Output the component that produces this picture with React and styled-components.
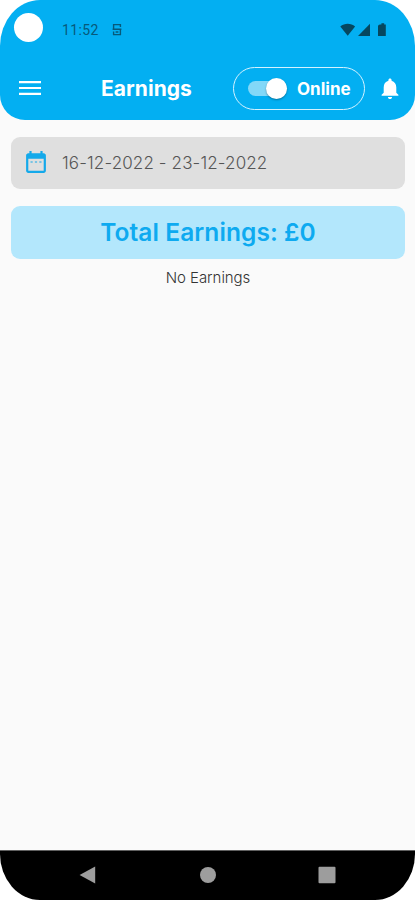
import React from "react";
import styled, { createGlobalStyle } from "styled-components";

const App = () => {
  return (
    <>
      <GlobalStyle />
      <Phone>
        <Header>
          <StatusBar>
            <Camera />
            <Time>11:52</Time>
            <DebugIcon viewBox="0 0 10 13">
              <path d="M1.6 5.8V1.6H8.4V4M0.6 6.2H9.4M8.4 6.2V11.6H1.6V8.6M3.6 9H6.4" />
            </DebugIcon>
            <StatusIcons viewBox="0 0 48 14">
              <path d="M0.3 3.4C4.5 0 10.9 0 15.1 3.4L7.7 12.8Z" />
              <path d="M30 0.8V13H18Z" />
              <path d="M40 1.6H41.4V0.3H44.2V1.6H45.8V13H38V3.2Q38 1.6 40 1.6Z" />
            </StatusIcons>
          </StatusBar>
          <Toolbar>
            <MenuIcon viewBox="0 0 22 14">
              <path d="M0 1.1H22M0 7H22M0 12.9H22" />
            </MenuIcon>
            <Title>Earnings</Title>
            <OnlinePill>
              <Switch>
                <Thumb />
              </Switch>
              <span>Online</span>
            </OnlinePill>
            <BellIcon viewBox="4 2 16 20">
              <path d="M12 22c1.1 0 2-.9 2-2h-4c0 1.1.9 2 2 2zm6-6v-5c0-3.07-1.63-5.64-4.5-6.32V4c0-.83-.67-1.5-1.5-1.5s-1.5.67-1.5 1.5v.68C7.64 5.36 6 7.92 6 11v5l-2 2v1h16v-1l-2-2z" />
            </BellIcon>
          </Toolbar>
        </Header>

        <Content>
          <DateRange>
            <CalendarIcon viewBox="3 1 18 20">
              <path d="M7 10h2v2H7zM11 10h2v2h-2zM15 10h2v2h-2z" opacity="0.5" />
              <path d="M19 3h-1V1h-2v2H8V1H6v2H5c-1.1 0-2 .9-2 2v14c0 1.1.9 2 2 2h14c1.1 0 2-.9 2-2V5c0-1.1-.9-2-2-2zm0 16H5V8h14v11z" />
            </CalendarIcon>
            <span>16-12-2022 - 23-12-2022</span>
          </DateRange>
          <Total>Total Earnings: £0</Total>
          <Empty>No Earnings</Empty>
        </Content>

        <NavBar>
          <NavIcon viewBox="0 0 18 18">
            <path d="M0.6 9L16.2 0.6V17.4Z" />
          </NavIcon>
          <NavIcon viewBox="0 0 18 18">
            <circle cx="9" cy="9" r="8" />
          </NavIcon>
          <NavIcon viewBox="0 0 18 18">
            <rect x="0.5" y="0.7" width="17" height="16.6" rx="1" />
          </NavIcon>
        </NavBar>
      </Phone>
    </>
  );
};

export default App;

const GlobalStyle = createGlobalStyle`
  * {
    box-sizing: border-box;
  }
  body {
    margin: 0;
    background: #ffffff;
    font-family: Inter, sans-serif;
  }
`;

const Phone = styled.div`
  width: 415px;
  height: 900px;
  display: flex;
  flex-direction: column;
  overflow: hidden;
  background: #fafafa;
  border-radius: 40px / 46px;
`;

const Header = styled.header`
  height: 119.5px;
  flex-shrink: 0;
  background: #03aff2;
  border-radius: 0 0 25px 25px;
`;

const StatusBar = styled.div`
  height: 57px;
  display: flex;
  align-items: center;
  padding: 2px 27px 0 14px;
`;

const Camera = styled.div`
  width: 29px;
  height: 29px;
  margin-top: -4px;
  border-radius: 50%;
  background: #ffffff;
`;

const Time = styled.span`
  width: 37px;
  margin: 1px 0 0 19px;
  font-family: Roboto, sans-serif;
  font-size: 14px;
  letter-spacing: 0.4px;
  color: #07597a;
`;

const DebugIcon = styled.svg`
  width: 10px;
  height: 13px;
  margin-left: 13px;
  fill: none;
  stroke: #07597a;
  stroke-width: 1.4;
`;

const StatusIcons = styled.svg`
  width: 48px;
  height: 14px;
  margin-left: auto;
  fill: #06475f;
`;

const Toolbar = styled.div`
  height: 62px;
  display: flex;
  align-items: center;
  padding: 0 16px 0 19px;
`;

const MenuIcon = styled.svg`
  width: 22px;
  height: 14px;
  fill: none;
  stroke: #ffffff;
  stroke-width: 2.2;
`;

const Title = styled.h1`
  width: 132px;
  margin: 1px 0 0 60px;
  font-size: 21px;
  font-weight: 700;
  line-height: 26px;
  letter-spacing: 0.05px;
  color: #ffffff;
`;

const OnlinePill = styled.div`
  width: 132px;
  height: 43px;
  display: flex;
  align-items: center;
  padding-left: 14px;
  border: 1.5px solid #d5f2ff;
  border-radius: 22px;
  color: #ffffff;
  font-size: 17px;
  font-weight: 700;

  span {
    margin: 1px 0 0 10px;
  }
`;

const Switch = styled.div`
  width: 39px;
  height: 15px;
  display: flex;
  align-items: center;
  justify-content: flex-end;
  border-radius: 8px;
  background: #83d8f8;
`;

const Thumb = styled.div`
  width: 21px;
  height: 21px;
  flex-shrink: 0;
  border-radius: 50%;
  background: #ffffff;
  box-shadow: 0 1px 2px rgba(0, 0, 0, 0.35);
`;

const BellIcon = styled.svg`
  width: 18px;
  height: 21px;
  margin-left: auto;
  fill: #ffffff;
`;

const Content = styled.main`
  flex: 1;
  display: flex;
  flex-direction: column;
  padding: 17px 10px 0 11px;
`;

const DateRange = styled.div`
  height: 52.5px;
  display: flex;
  align-items: center;
  padding-left: 15px;
  border-radius: 9px;
  background: #dfdfdf;
  color: #555555;
  font-size: 17px;
  font-weight: 300;
  letter-spacing: 0.13px;

  span {
    margin-left: 16px;
  }
`;

const CalendarIcon = styled.svg`
  width: 20px;
  height: 22px;
  margin-top: -1px;
  fill: #14a9ea;
`;

const Total = styled.div`
  height: 52.5px;
  margin-top: 17px;
  border-radius: 9px;
  background: #b3e7fc;
  color: #0eaaf0;
  font-size: 24.5px;
  font-weight: 600;
  line-height: 52px;
  letter-spacing: 0.08px;
  text-align: center;
`;

const Empty = styled.p`
  margin: 9px 0 0;
  color: #333333;
  font-size: 15px;
  font-weight: 300;
  line-height: 20px;
  letter-spacing: -0.05px;
  text-align: center;
`;

const NavBar = styled.nav`
  height: 50px;
  flex-shrink: 0;
  display: flex;
  align-items: center;
  justify-content: space-between;
  padding: 0 79px 1px;
  border-top: 1px solid #606060;
  background: #000000;
`;

const NavIcon = styled.svg`
  width: 18px;
  height: 18px;
  fill: #9d9d9d;
`;
